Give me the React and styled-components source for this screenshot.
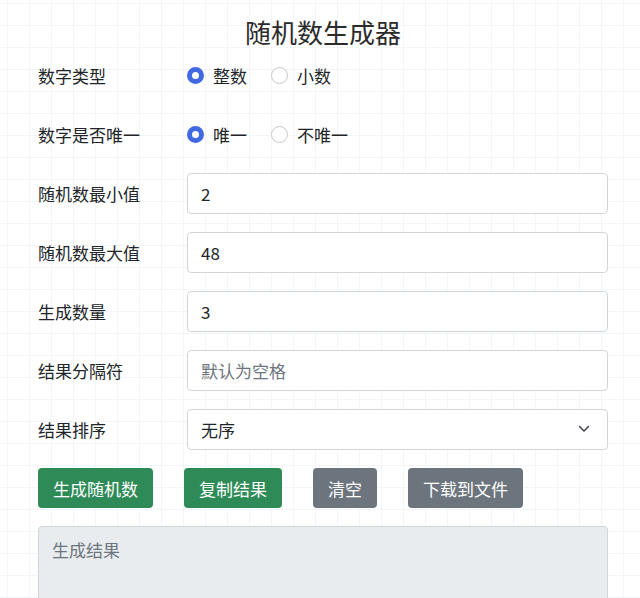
import React, { useState } from 'react';
import styled, { createGlobalStyle } from 'styled-components';

const GlobalStyle = createGlobalStyle`
  html, body {
    margin: 0;
    padding: 0;
  }
  body {
    background-color: #ffffff;
    background-image:
      linear-gradient(to right, #f2f6f8 1px, transparent 1px),
      linear-gradient(to bottom, #f2f6f8 1px, transparent 1px);
    background-size: 22px 22px;
    background-position: 7px 3px;
    font-family: "Noto Sans CJK SC", "Noto Sans", sans-serif;
    color: #212529;
  }
`;

const Page = styled.div`
  width: 570px;
  margin-left: 38px;
  padding-top: 14px;
`;

const Title = styled.h1`
  margin: 0;
  text-align: center;
  font-size: 26px;
  line-height: 36px;
  font-weight: 400;
  color: #2b2b2b;
`;

const Form = styled.div`
  display: grid;
  grid-template-columns: 149px 1fr;
  grid-auto-rows: 40px;
  row-gap: 19px;
  margin-top: 5px;
  align-items: center;
`;

const Label = styled.label`
  font-size: 17px;
  line-height: 1;
  color: #212529;
`;

const RadioGroup = styled.div`
  display: flex;
  align-items: center;
  gap: 24px;
`;

const RadioOption = styled.label`
  display: flex;
  align-items: center;
  gap: 9px;
  font-size: 17px;
  cursor: pointer;
`;

const RadioInput = styled.input.attrs({ type: 'radio' })`
  appearance: none;
  margin: 0;
  width: 17px;
  height: 17px;
  border-radius: 50%;
  border: 1px solid #c4c7ca;
  background: #fff;
  box-sizing: border-box;
  &:checked {
    border: 5px solid #4169e1;
  }
`;

const TextInput = styled.input`
  box-sizing: border-box;
  width: 100%;
  height: 41px;
  padding: 0 13px;
  font-size: 17px;
  font-family: inherit;
  color: #212529;
  background: #fff;
  border: 1px solid #d3d6d9;
  border-radius: 4px;
  outline: none;
  &::placeholder {
    color: #6c757d;
  }
`;

const SelectWrap = styled.div`
  position: relative;
  height: 41px;
`;

const Select = styled.select`
  box-sizing: border-box;
  width: 100%;
  height: 41px;
  padding: 0 13px;
  font-size: 17px;
  font-family: inherit;
  color: #212529;
  background: #fff;
  border: 1px solid #d3d6d9;
  border-radius: 4px;
  appearance: none;
  outline: none;
`;

const Chevron = styled.svg`
  position: absolute;
  right: 18px;
  top: 16px;
  pointer-events: none;
`;

const ButtonRow = styled.div`
  display: flex;
  gap: 31px;
  margin-top: 19px;
`;

const Button = styled.button`
  height: 40px;
  padding: 0 15px;
  font-size: 17px;
  font-family: inherit;
  color: #fff;
  background: ${(p) => (p.$variant === 'secondary' ? '#6c757d' : '#2e8b57')};
  border: none;
  border-radius: 4px;
  cursor: pointer;
`;

const Result = styled.textarea`
  display: block;
  box-sizing: border-box;
  width: 100%;
  height: 140px;
  margin-top: 18px;
  padding: 10px 13px;
  font-size: 17px;
  font-family: inherit;
  background: #e9ecef;
  border: 1px solid #d3d6d9;
  border-radius: 4px;
  resize: none;
  &::placeholder {
    color: #6c757d;
  }
`;

export default function App() {
  const [type, setType] = useState('int');
  const [unique, setUnique] = useState('yes');
  const [min, setMin] = useState('2');
  const [max, setMax] = useState('48');
  const [count, setCount] = useState('3');
  const [sep, setSep] = useState('');
  const [order, setOrder] = useState('none');

  return (
    <>
      <GlobalStyle />
      <Page>
        <Title>随机数生成器</Title>
        <Form>
          <Label>数字类型</Label>
          <RadioGroup>
            <RadioOption>
              <RadioInput name="type" checked={type === 'int'} onChange={() => setType('int')} />
              整数
            </RadioOption>
            <RadioOption>
              <RadioInput name="type" checked={type === 'float'} onChange={() => setType('float')} />
              小数
            </RadioOption>
          </RadioGroup>

          <Label>数字是否唯一</Label>
          <RadioGroup>
            <RadioOption>
              <RadioInput name="unique" checked={unique === 'yes'} onChange={() => setUnique('yes')} />
              唯一
            </RadioOption>
            <RadioOption>
              <RadioInput name="unique" checked={unique === 'no'} onChange={() => setUnique('no')} />
              不唯一
            </RadioOption>
          </RadioGroup>

          <Label>随机数最小值</Label>
          <TextInput value={min} onChange={(e) => setMin(e.target.value)} />

          <Label>随机数最大值</Label>
          <TextInput value={max} onChange={(e) => setMax(e.target.value)} />

          <Label>生成数量</Label>
          <TextInput value={count} onChange={(e) => setCount(e.target.value)} />

          <Label>结果分隔符</Label>
          <TextInput placeholder="默认为空格" value={sep} onChange={(e) => setSep(e.target.value)} />

          <Label>结果排序</Label>
          <SelectWrap>
            <Select value={order} onChange={(e) => setOrder(e.target.value)}>
              <option value="none">无序</option>
              <option value="asc">升序</option>
              <option value="desc">降序</option>
            </Select>
            <Chevron width="12" height="8" viewBox="0 0 12 8">
              <path d="M1.5 1.5 L6 6 L10.5 1.5" fill="none" stroke="#343a40" strokeWidth="1.4" strokeLinecap="round" strokeLinejoin="round" />
            </Chevron>
          </SelectWrap>
        </Form>

        <ButtonRow>
          <Button>生成随机数</Button>
          <Button>复制结果</Button>
          <Button $variant="secondary">清空</Button>
          <Button $variant="secondary">下载到文件</Button>
        </ButtonRow>

        <Result placeholder="生成结果" readOnly />
      </Page>
    </>
  );
}
